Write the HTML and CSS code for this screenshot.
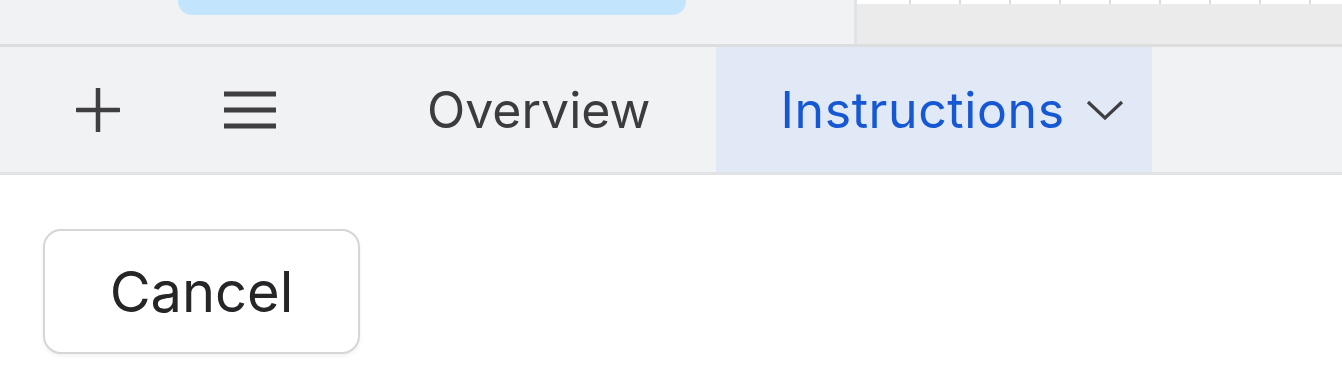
FILE: index.html
```html
<!DOCTYPE html>
<html>
<head>
<meta charset="utf-8">
<link rel="stylesheet" href="styles.css">
</head>
<body>
<div class="top">
  <div class="top-left">
    <div class="pill"></div>
  </div>
  <div class="grid-area">
    <div class="cells">
      <div class="cell first"></div>
      <div class="cell"></div><div class="cell"></div><div class="cell"></div>
      <div class="cell"></div><div class="cell"></div><div class="cell"></div>
      <div class="cell"></div><div class="cell"></div><div class="cell"></div>
    </div>
  </div>
</div>
<div class="tabbar">
  <button class="icon-btn plus" aria-label="Add">
    <svg width="44" height="44" viewBox="0 0 44 44"><path d="M22 1v42M1 22h42" stroke="#3f3f41" stroke-width="4.5" stroke-linecap="round" fill="none"/></svg>
  </button>
  <button class="icon-btn menu" aria-label="Menu">
    <svg width="58" height="38" viewBox="0 0 58 38"><path d="M3 3h52M3 19h52M3 35h52" stroke="#3f3f41" stroke-width="5" stroke-linecap="butt" fill="none"/></svg>
  </button>
  <div class="tab">Overview</div>
  <div class="tab active"><span class="label">Instructions</span>
    <svg class="chev" width="38" height="20" viewBox="0 0 38 20"><path d="M2 2l17 16L36 2" stroke="#3f3f41" stroke-width="3.2" fill="none"/></svg>
  </div>
</div>
<div class="content">
  <button class="cancel">Cancel</button>
</div>
</body>
</html>
```
FILE: styles.css
```css
* { box-sizing: border-box; }
html, body { margin: 0; padding: 0; }
body {
  width: 1342px;
  height: 388px;
  overflow: hidden;
  background: #ffffff;
  font-family: Inter, "Noto Sans", sans-serif;
}
.top {
  display: flex;
  height: 47px;
  background: #f1f2f4;
  border-bottom: 3px solid #dcdddf;
}
.top-left {
  flex: none;
  width: 854px;
  padding-left: 178px;
}
.pill {
  width: 508px;
  height: 15px;
  background: #c2e4fd;
  border-radius: 0 0 14px 14px;
}
.grid-area {
  flex: 1;
  background: #ebebeb;
  border-left: 3px solid #e2e3e5;
}
.cells {
  display: flex;
  height: 4px;
}
.cell {
  width: 50px;
  flex: none;
  background: #ffffff;
  border-left: 2px solid #dcdcdc;
}
.cell.first {
  width: 52px;
  border-left: none;
}
.tabbar {
  display: flex;
  align-items: stretch;
  height: 128px;
  background: #f1f2f4;
  border-bottom: 3px solid #e2e3e5;
}
.icon-btn {
  border: none;
  background: transparent;
  padding: 0;
  display: flex;
  align-items: center;
  justify-content: center;
}
.plus { width: 44px; margin-left: 76px; }
.menu { width: 58px; margin-left: 101px; margin-right: 82px; }
.tab {
  display: flex;
  align-items: center;
  padding: 0 65px 0 66px;
  font-size: 50px;
  color: #3c3c3e;
}
.tab.active {
  background: #e1e9f6;
  color: #1658d4;
  padding: 0 28px 0 65px;
}
.tab.active .label {
  letter-spacing: 0.6px;
}
.chev { margin-left: 21px; }
.content {
  padding: 54px 0 0 43px;
}
.cancel {
  width: 317px;
  height: 125px;
  background: #ffffff;
  border: 2px solid #d6d6d8;
  border-radius: 18px;
  box-shadow: 0 2px 4px rgba(0,0,0,0.06);
  font-family: Inter, "Noto Sans", sans-serif;
  font-size: 56px;
  color: #262628;
  padding: 0;
}
```
